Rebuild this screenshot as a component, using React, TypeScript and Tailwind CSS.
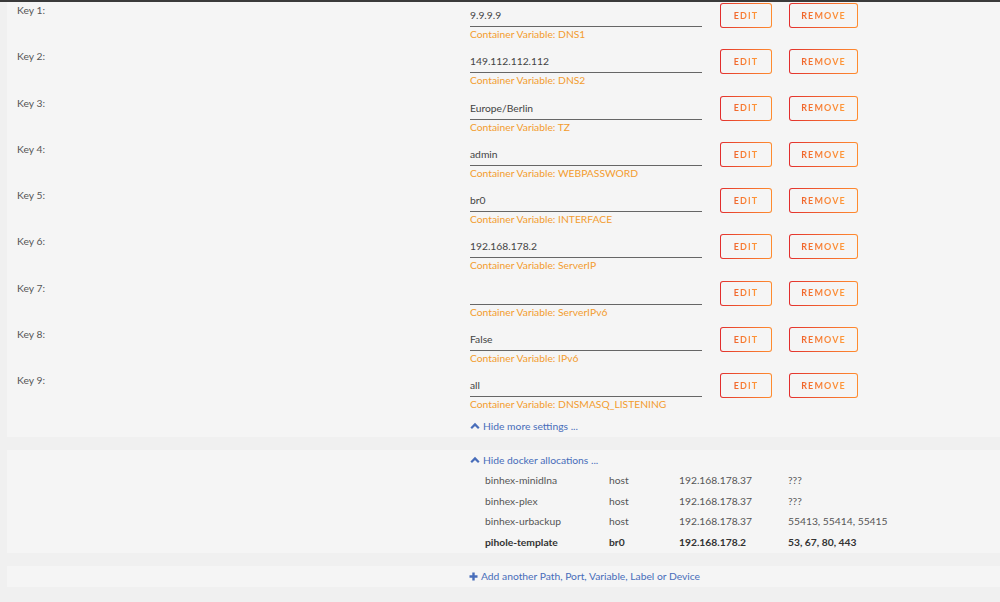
const keys = [
  { value: "9.9.9.9", name: "DNS1" },
  { value: "149.112.112.112", name: "DNS2" },
  { value: "Europe/Berlin", name: "TZ" },
  { value: "admin", name: "WEBPASSWORD" },
  { value: "br0", name: "INTERFACE" },
  { value: "192.168.178.2", name: "ServerIP" },
  { value: "", name: "ServerIPv6" },
  { value: "False", name: "IPv6" },
  { value: "all", name: "DNSMASQ_LISTENING" },
];

const allocations = [
  { name: "binhex-minidlna", net: "host", ip: "192.168.178.37", ports: "???" },
  { name: "binhex-plex", net: "host", ip: "192.168.178.37", ports: "???" },
  { name: "binhex-urbackup", net: "host", ip: "192.168.178.37", ports: "55413, 55414, 55415" },
  { name: "pihole-template", net: "br0", ip: "192.168.178.2", ports: "53, 67, 80, 443", bold: true },
];

function GradButton({ label, width }: { label: string; width: string }) {
  return (
    <div className={`${width} h-[25px] rounded-[3px] bg-linear-to-r from-[#e22d2d] to-[#ff8c2f] p-px`}>
      <div className="flex h-full w-full items-center justify-center rounded-[2px] bg-[#f5f5f5]">
        <span className="bg-linear-to-r from-[#f0642c] to-[#ff9a3a] bg-clip-text text-[9px] font-bold tracking-[1.1px] text-transparent">
          {label}
        </span>
      </div>
    </div>
  );
}

function Chevron() {
  return (
    <svg width="10" height="8" viewBox="0 0 10 8" className="mr-[3px]">
      <path d="M1.2 6.2 L5 2.4 L8.8 6.2" fill="none" stroke="#486dba" strokeWidth="2.2" />
    </svg>
  );
}

export default function App() {
  return (
    <div
      className="min-h-[602px] w-[1000px] overflow-hidden bg-[#f0f0f0] text-[10.3px]"
      style={{ fontFamily: "Lato, 'Liberation Sans', sans-serif" }}
    >
      <div className="h-[2px] bg-[#3a3a3a]" />
      <div className="ml-[7px] bg-[#f5f5f5] pb-[4px]">
        {keys.map((k, i) => (
          <div key={i} className="flex h-[46.25px]">
            <div className="w-[463px] pl-[10px] leading-[14px] text-[#555]">
              <div className="pt-[1px]">Key {i + 1}:</div>
            </div>
            <div className="w-[232px]">
              <div className="flex h-[25px] items-end border-b border-[#666] pb-[4px] leading-[14px] text-[#444]">
                {k.value}
              </div>
              <div className="leading-[14px] text-[#f39c2e]">Container Variable: {k.name}</div>
            </div>
            <div className="ml-[18px] flex gap-[17px] pt-[1px]">
              <GradButton label="EDIT" width="w-[52px]" />
              <GradButton label="REMOVE" width="w-[69px]" />
            </div>
          </div>
        ))}
        <div className="ml-[463px] mt-[1px] flex items-center leading-[14px] text-[#486dba]">
          <Chevron />
          Hide more settings ...
        </div>
      </div>
      <div className="mt-[13px] ml-[7px] bg-[#f5f5f5] pt-[3px]">
        <div className="ml-[463px] flex items-center leading-[14px] text-[#486dba]">
          <Chevron />
          Hide docker allocations ...
        </div>
        <div className="ml-[478px] mt-[3px]">
          {allocations.map((a) => (
            <div
              key={a.name}
              className={`flex h-[20.7px] items-center ${a.bold ? "font-bold text-[#333]" : "text-[#555]"}`}
            >
              <span className="w-[124px]">{a.name}</span>
              <span className="w-[70px]">{a.net}</span>
              <span className="w-[109px]">{a.ip}</span>
              <span>{a.ports}</span>
            </div>
          ))}
        </div>
      </div>
      <div className="mt-[13px] ml-[7px] flex h-[21px] items-center bg-[#f5f5f5]">
        <div className="ml-[462px] flex items-center text-[#486dba]">
          <svg width="9" height="9" viewBox="0 0 9 9" className="mr-[3px]">
            <path d="M4.5 0.5 V8.5 M0.5 4.5 H8.5" stroke="#486dba" strokeWidth="2.4" />
          </svg>
          Add another Path, Port, Variable, Label or Device
        </div>
      </div>
    </div>
  );
}
